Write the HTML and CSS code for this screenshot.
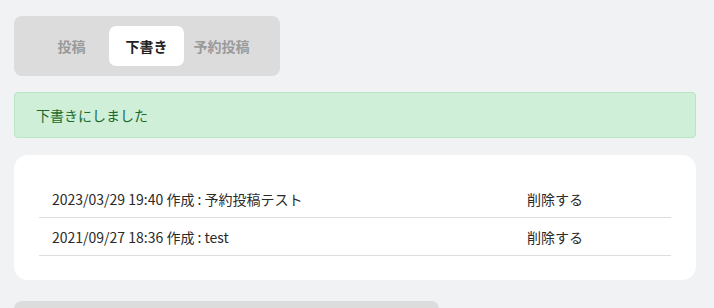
FILE: index.html
```html
<!DOCTYPE html>
<html lang="ja">
<head>
<meta charset="utf-8">
<link rel="stylesheet" href="styles.css">
</head>
<body>
<div class="page">
  <nav class="tabs">
    <div class="tab">投稿</div>
    <div class="tab active">下書き</div>
    <div class="tab">予約投稿</div>
  </nav>
  <div class="alert">下書きにしました</div>
  <section class="card">
    <div class="row">
      <span class="title">2023/03/29 19:40 作成 : 予約投稿テスト</span>
      <span class="action">削除する</span>
    </div>
    <div class="row">
      <span class="title">2021/09/27 18:36 作成 : test</span>
      <span class="action">削除する</span>
    </div>
  </section>
  <div class="more"></div>
</div>
</body>
</html>
```
FILE: styles.css
```css
html, body {
  margin: 0;
  padding: 0;
  background: #f1f2f4;
  font-family: "Noto Sans CJK JP", "Noto Sans", sans-serif;
}
.page {
  padding: 16px 18px 0 14px;
  display: flex;
  flex-direction: column;
  align-items: flex-start;
}
.tabs {
  display: flex;
  background: #dcdcdc;
  border-radius: 8px;
  padding: 10px 21px 10px 20px;
}
.tab {
  width: 75px;
  height: 40px;
  display: flex;
  align-items: center;
  justify-content: center;
  font-size: 14px;
  font-weight: 700;
  color: #9a9a9a;
  border-radius: 7px;
}
.tab.active {
  background: #fff;
  color: #222;
}
.alert {
  align-self: stretch;
  margin-top: 16px;
  height: 46px;
  box-sizing: border-box;
  display: flex;
  align-items: center;
  padding: 0 21px;
  background: #cfefd8;
  border: 1px solid #b6e6c4;
  border-radius: 4px;
  color: #1c6a2e;
  font-size: 14px;
}
.card {
  align-self: stretch;
  margin-top: 17px;
  background: #fff;
  border-radius: 14px;
  padding: 25px 25px 24px;
}
.row {
  display: grid;
  grid-template-columns: 1fr 144px;
  align-items: center;
  height: 37px;
  border-bottom: 1px solid #dedede;
  padding-left: 13px;
  font-size: 14px;
  color: #2a2a2a;
}
.more {
  margin-top: 21px;
  width: 425px;
  height: 20px;
  background: #dcdcdc;
  border-radius: 8px 8px 0 0;
}
```
